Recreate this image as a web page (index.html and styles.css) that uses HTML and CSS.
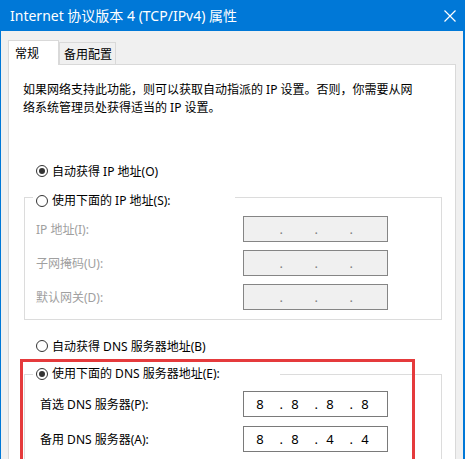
FILE: index.html
```html
<!DOCTYPE html>
<html lang="zh-CN">
<head>
    <meta charset="UTF-8">
    <meta name="viewport" content="width=device-width, initial-scale=1.0">
    <title>Internet 协议版本 4 (TCP/IPv4) 属性</title>
    <link rel="stylesheet" href="styles.css">
</head>
<body>
    <div class="window">
        <div class="titlebar">
            <span class="title">Internet 协议版本 4 (TCP/IPv4) 属性</span>
            <svg class="close" width="12" height="12" viewBox="0 0 12 12">
                <path d="M0.5 0.5 L11.5 11.5 M11.5 0.5 L0.5 11.5" stroke="#fff" stroke-width="1.2" fill="none"/>
            </svg>
        </div>

        <div class="content">
            <!-- Tabs -->
            <div class="tabs">
                <div class="tab active">常规</div>
                <div class="tab">备用配置</div>
            </div>

            <div class="panel">
                <p class="intro">如果网络支持此功能，则可以获取自动指派的 IP 设置。否则，你需要从网络系统管理员处获得适当的 IP 设置。</p>

                <div class="radio-row">
                    <span class="radio checked"></span>自动获得 IP 地址(O)
                </div>

                <fieldset class="group ip-group">
                    <legend><span class="radio"></span>使用下面的 IP 地址(S):</legend>
                    <div class="field-row disabled">
                        <label>IP 地址(I):</label>
                        <div class="ip-field">
                            <span class="oct"></span><span class="dot">.</span>
                            <span class="oct"></span><span class="dot">.</span>
                            <span class="oct"></span><span class="dot">.</span>
                            <span class="oct"></span>
                        </div>
                    </div>
                    <div class="field-row disabled">
                        <label>子网掩码(U):</label>
                        <div class="ip-field">
                            <span class="oct"></span><span class="dot">.</span>
                            <span class="oct"></span><span class="dot">.</span>
                            <span class="oct"></span><span class="dot">.</span>
                            <span class="oct"></span>
                        </div>
                    </div>
                    <div class="field-row disabled">
                        <label>默认网关(D):</label>
                        <div class="ip-field">
                            <span class="oct"></span><span class="dot">.</span>
                            <span class="oct"></span><span class="dot">.</span>
                            <span class="oct"></span><span class="dot">.</span>
                            <span class="oct"></span>
                        </div>
                    </div>
                </fieldset>

                <div class="radio-row dns-auto">
                    <span class="radio"></span>自动获得 DNS 服务器地址(B)
                </div>

                <fieldset class="group dns-group">
                    <legend><span class="radio checked"></span>使用下面的 DNS 服务器地址(E):</legend>
                    <div class="field-row">
                        <label>首选 DNS 服务器(P):</label>
                        <div class="ip-field">
                            <span class="oct">8</span><span class="dot">.</span>
                            <span class="oct">8</span><span class="dot">.</span>
                            <span class="oct">8</span><span class="dot">.</span>
                            <span class="oct">8</span>
                        </div>
                    </div>
                    <div class="field-row">
                        <label>备用 DNS 服务器(A):</label>
                        <div class="ip-field">
                            <span class="oct">8</span><span class="dot">.</span>
                            <span class="oct">8</span><span class="dot">.</span>
                            <span class="oct">4</span><span class="dot">.</span>
                            <span class="oct">4</span>
                        </div>
                    </div>
                </fieldset>

                <!-- red highlight drawn over the DNS settings -->
                <div class="highlight"></div>
            </div>
        </div>
    </div>
</body>
</html>
```

FILE: styles.css
```css
html, body {
    margin: 0;
    padding: 0;
}

body {
    font-family: "Noto Sans", "Noto Sans CJK SC", sans-serif;
    font-size: 12px;
    color: #000;
    background: #f0f0f0;
    width: 465px;
    height: 459px;
    overflow: hidden;
}

.window {
    height: 459px;
    border-left: 1px solid #0078d7;
    border-right: 2px solid #0078d7;
    overflow: hidden;
}

/* Title bar */
.titlebar {
    height: 31px;
    background: #0078d7;
    display: flex;
    align-items: center;
    justify-content: space-between;
    padding: 0 7px 0 9px;
    color: #fff;
}

.title {
    font-size: 14px;
    line-height: 18px;
}

.content {
    padding: 9px 7px 0 7px;
}

/* Tabs */
.tabs {
    display: flex;
    align-items: flex-end;
}

.tab {
    box-sizing: border-box;
    border: 1px solid #d9d9d9;
    border-bottom: none;
    display: flex;
    align-items: center;
    font-size: 12px;
}

.tab.active {
    width: 51px;
    height: 25px;
    padding-left: 6px;
    background: #fff;
    position: relative;
    margin-bottom: -1px;
    z-index: 1;
}

.tab:not(.active) {
    width: 57px;
    height: 22px;
    padding-left: 4px;
    background: #f0f0f0;
}

/* Panel */
.panel {
    position: relative;
    height: 420px;
    background: #fff;
    border: 1px solid #d9d9d9;
    padding-top: 16px;
    box-sizing: border-box;
}

.intro {
    margin: 0 0 0 14px;
    width: 400px;
    line-height: 18px;
}

/* Radios */
.radio-row {
    display: flex;
    align-items: center;
    height: 16px;
    margin: 46px 0 0 27px;
    white-space: nowrap;
}

.radio-row.dns-auto {
    margin-top: 18px;
}

.radio {
    box-sizing: border-box;
    display: inline-flex;
    align-items: center;
    justify-content: center;
    width: 12px;
    height: 12px;
    border: 1px solid #333;
    border-radius: 50%;
    background: #fff;
    margin-right: 4px;
    flex-shrink: 0;
}

.radio.checked::after {
    content: "";
    width: 6px;
    height: 6px;
    border-radius: 50%;
    background: #333;
}

/* Group boxes */
.group {
    box-sizing: border-box;
    width: 418px;
    margin: 6px 0 0 15px;
    padding: 7px 0 9px 8px;
    border: 1px solid #dcdcdc;
    min-inline-size: 0;
}

.group legend {
    box-sizing: border-box;
    display: flex;
    align-items: center;
    height: 24px;
    padding: 8px 0 0 3px;
    width: 202px;
    line-height: 16px;
    white-space: nowrap;
}

.dns-group {
    margin-top: 12px;
    padding-top: 9px;
}

.dns-group legend {
    height: 16px;
    padding-top: 0;
    width: 247px;
}

.field-row {
    display: flex;
    align-items: center;
    height: 26px;
    margin-top: 8px;
}

.field-row:first-of-type {
    margin-top: 0;
}

.field-row label {
    width: 207px;
    margin-left: 3px;
}

.dns-group .field-row {
    margin-top: 9px;
}

.dns-group .field-row label {
    width: 203px;
    margin-left: 7px;
}

.dns-group .field-row:first-of-type {
    margin-top: 0;
}

.field-row.disabled label {
    color: #a0a0a0;
}

/* IP address boxes */
.ip-field {
    box-sizing: border-box;
    width: 145px;
    height: 26px;
    border: 1px solid #7a7a7a;
    background: #fff;
    display: flex;
    align-items: center;
    padding-left: 6px;
    font-size: 13px;
}

.field-row.disabled .ip-field {
    background: #f0f0f0;
    border-color: #858585;
    color: #808080;
}

.oct {
    width: 20px;
    text-align: center;
}

.dot {
    width: 15px;
    text-align: right;
    padding-right: 2px;
    box-sizing: border-box;
}

/* Red highlight around the DNS part */
.highlight {
    position: absolute;
    left: 11px;
    top: 294px;
    width: 395px;
    height: 160px;
    border: 3px solid #e53a3c;
    box-sizing: border-box;
}
```
